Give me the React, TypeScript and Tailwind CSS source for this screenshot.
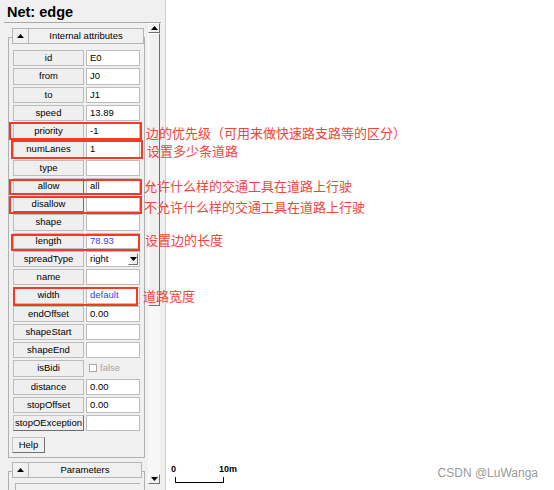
import React from "react"

type Note = {
  box: string
  pos: string
  text: string
}

type RowType = {
  label: string
  value?: string
  kind?: "text" | "blue" | "select" | "check" | "empty"
  raised?: boolean
  note?: Note
}

const rows: RowType[] = [
  { label: "id", value: "E0" },
  { label: "from", value: "J0" },
  { label: "to", value: "J1" },
  { label: "speed", value: "13.89" },
  {
    label: "priority",
    value: "-1",
    note: {
      box: "left-[-4px] top-[-1px] w-[133px] h-[18px]",
      pos: "left-[133px] top-[2px]",
      text: "边的优先级（可用来做快速路支路等的区分）",
    },
  },
  {
    label: "numLanes",
    value: "1",
    note: {
      box: "left-[-2px] top-[-1px] w-[132px] h-[19px]",
      pos: "left-[134px] top-[2px]",
      text: "设置多少条道路",
    },
  },
  { label: "type", kind: "empty" },
  {
    label: "allow",
    value: "all",
    raised: true,
    note: {
      box: "left-[-4px] top-[1px] w-[133px] h-[16.5px]",
      pos: "left-[131px] top-0",
      text: "允许什么样的交通工具在道路上行驶",
    },
  },
  {
    label: "disallow",
    kind: "empty",
    raised: true,
    note: {
      box: "left-[-4px] top-0 w-[133px] h-[17.5px]",
      pos: "left-[131px] top-[3px]",
      text: "不允许什么样的交通工具在道路上行驶",
    },
  },
  { label: "shape", kind: "empty" },
  {
    label: "length",
    value: "78.93",
    kind: "blue",
    note: {
      box: "left-[-2px] top-[1px] w-[129px] h-[17.5px]",
      pos: "left-[132px] top-[-1px]",
      text: "设置边的长度",
    },
  },
  { label: "spreadType", value: "right", kind: "select" },
  { label: "name", kind: "empty" },
  {
    label: "width",
    value: "default",
    kind: "blue",
    note: {
      box: "left-0 top-0 w-[125px] h-[18.5px]",
      pos: "left-[130px] top-[1px]",
      text: "道路宽度",
    },
  },
  { label: "endOffset", value: "0.00" },
  { label: "shapeStart", kind: "empty" },
  { label: "shapeEnd", kind: "empty" },
  { label: "isBidi", value: "false", kind: "check" },
  { label: "distance", value: "0.00" },
  { label: "stopOffset", value: "0.00" },
  { label: "stopOException", kind: "empty", raised: true },
]

const Tri = ({ down }: { down?: boolean }) => (
  <svg width="7" height="4" viewBox="0 0 7 4">
    <polygon points={down ? "0,0 7,0 3.5,4" : "0,4 7,4 3.5,0"} fill="#000" />
  </svg>
)

const AttrRow: React.FC<{ row: RowType }> = ({ row }) => {
  const labelCls = row.raised
    ? "border-[#c4c4c4] border-r-[#6f6f6f] border-b-[#6f6f6f]"
    : "border-[#bcbcbc]"

  return (
    <div className="relative flex h-[16.25px] shrink-0 gap-[2px]">
      <div className={"w-[71px] h-full flex items-center justify-center bg-[#efefef] border " + labelCls}>
        {row.label}
      </div>

      {row.kind === "check" ? (
        <div className="w-[54px] h-full flex items-center gap-[3px] pl-[3px]">
          <div className="w-[8px] h-[8px] border border-[#a8a8a8] bg-white" />
          <span className="text-[#a5a5a5]">{row.value}</span>
        </div>
      ) : (
        <div className="w-[54px] h-full flex items-center bg-white border border-[#bcbcbc] pl-[3px]">
          <span className={row.kind === "blue" ? "text-[#3a3aff]" : "text-black"}>{row.value}</span>
          {row.kind === "select" && (
            <div className="ml-auto mr-px w-[10px] h-[12px] flex items-center justify-center bg-[#f0f0f0] border border-white border-r-[#6f6f6f] border-b-[#6f6f6f]">
              <Tri down />
            </div>
          )}
        </div>
      )}

      {row.note && (
        <>
          <div className={"absolute border-2 border-[#f23a24] z-10 " + row.note.box} />
          <div
            className={
              "absolute z-10 whitespace-nowrap leading-[16px] text-[13px] text-[#f2463a] " + row.note.pos
            }
            style={{ fontFamily: '"Noto Sans CJK SC", sans-serif' }}
          >
            {row.note.text}
          </div>
        </>
      )}
    </div>
  )
}

const GroupHeader: React.FC<{ title: string; w: string }> = ({ title, w }) => (
  <div className="flex h-[16px] -mt-[10px] ml-[3px]">
    <div className="w-[17px] h-full flex items-center justify-center bg-[#f0f0f0] border border-[#b4b4b4]">
      <Tri />
    </div>
    <div className={"h-full flex items-center justify-center bg-[#f0f0f0] border border-l-0 border-[#b4b4b4] " + w}>
      {title}
    </div>
  </div>
)

const App = () => {
  return (
    <div
      className="w-[554px] h-[490px] overflow-hidden bg-white flex text-[9.5px] text-black"
      style={{ fontFamily: '"Liberation Sans", Arial, sans-serif' }}
    >
      {/* side panel */}
      <div className="w-[166px] h-full shrink-0 overflow-visible bg-[#f0f0f0] border-r border-[#cfcfcf] flex flex-col">
        <div className="h-[22px] shrink-0 pl-[7px] pt-[4px] text-[14.5px] leading-[17px] font-bold">Net: edge</div>
        <div className="h-px shrink-0 mx-[4px] bg-[#a9a9a9]" />

        <div className="flex shrink-0">
          <div className="w-[148px]">
            {/* Internal attributes */}
            <div className="mt-[14px] ml-[8px] w-[137px] border border-[#b0b0b0] pb-[4px]">
              <GroupHeader title="Internal attributes" w="w-[115px]" />
              <div className="mt-[6px] pl-[4px] flex flex-col gap-[2px]">
                {rows.map((r) => (
                  <AttrRow key={r.label} row={r} />
                ))}
              </div>
              <button className="mt-[6px] ml-[3px] w-[33px] h-[16px] flex items-center justify-center bg-[#f0f0f0] border border-[#c4c4c4] border-r-[#6f6f6f] border-b-[#6f6f6f]">
                Help
              </button>
            </div>

            {/* Parameters */}
            <div className="mt-[13px] ml-[8px] w-[137px] h-[40px] border border-[#b0b0b0]">
              <GroupHeader title="Parameters" w="w-[113px]" />
              <div className="mt-[5px] ml-[6px] w-[125px] h-[10px] border-t border-l border-[#b4b4b4]" />
            </div>
          </div>

          {/* scrollbar */}
          <div className="w-[12px] h-[461px] flex flex-col bg-[#f7f7f7]">
            <div className="h-[10px] shrink-0 flex items-center justify-center bg-[#f0f0f0] border border-white border-r-[#6f6f6f] border-b-[#6f6f6f]">
              <Tri />
            </div>
            <div className="h-[273px] shrink-0 bg-[#f0f0f0] border border-white border-r-[#6f6f6f] border-b-[#6f6f6f]" />
            <div className="flex-1" />
            <div className="h-[10px] shrink-0 flex items-center justify-center bg-[#f0f0f0] border border-white border-r-[#6f6f6f] border-b-[#6f6f6f]">
              <Tri down />
            </div>
          </div>
        </div>
      </div>

      {/* canvas */}
      <div className="flex-1 flex flex-col justify-end">
        <div className="flex items-end justify-between pl-[5px] pr-[16px] pb-[7px]">
          <div className="w-[66px]">
            <div className="flex justify-between h-[10px] leading-[10px] text-[9px] font-bold">
              <span>0</span>
              <span>10m</span>
            </div>
            <div className="mt-[3px] ml-[4px] w-[49px] h-[6px] border-l border-r border-b border-black" />
          </div>
          <div className="mb-[2px] text-[12px] leading-[16px] text-[#9a9a9a]">CSDN @LuWanga</div>
        </div>
      </div>
    </div>
  )
}

export default App
